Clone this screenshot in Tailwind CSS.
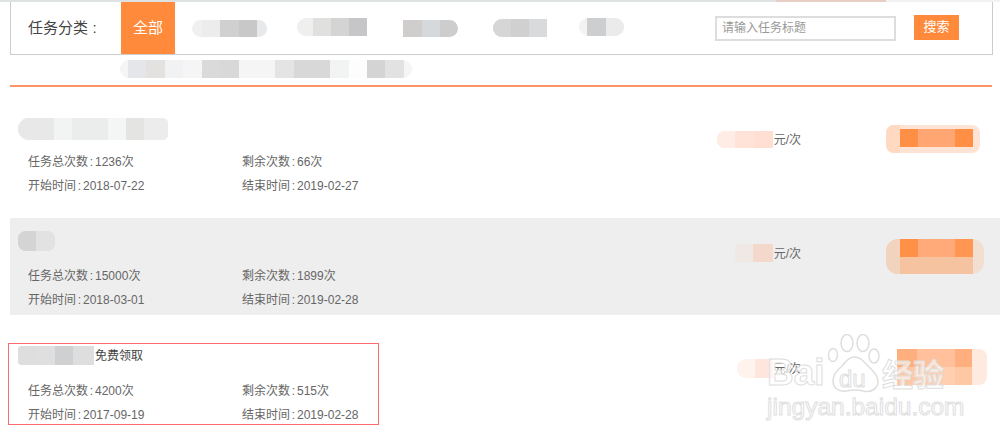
<!DOCTYPE html>
<html lang="zh">
<head>
    <meta charset="UTF-8">
    <title>任务分类</title>
    <script src="https://cdn.jsdelivr.net/npm/@tailwindcss/browser@4"></script>
</head>
<body class="relative w-[1000px] h-[439px] overflow-hidden bg-white font-['Liberation_Sans','Noto_Sans_CJK_SC',sans-serif] text-xs text-[#666]">

    <!-- top strip -->
    <div class="flex h-[2px] bg-[#dfe2e2]">
        <div class="w-[776px]"></div>
        <div class="w-[110px] bg-[#e8cfc4]"></div>
        <div class="flex-1 bg-[#f2f2f2]"></div>
    </div>

    <!-- filter box -->
    <div class="ml-[10px] w-[983px] h-[53px] border-x border-b border-[#ccc] flex items-center">
        <span class="ml-[17px] w-[93px] text-[15px] text-[#444]">任务分类<span class="inline-block w-[13px] text-center">:</span></span>
        <div class="w-[54px] h-full bg-[#ff8a3c] text-white text-[15px] flex items-center justify-center">全部</div>
        <div class="ml-[17px] h-[17px] w-[75px] rounded-full overflow-hidden flex bg-[#f0f0f0]">
            <i class="w-[10px]"></i><i class="w-[18px] bg-[#ececec]"></i><i class="w-[19px] bg-[#d0d0d0]"></i><i class="w-[18px] bg-[#c8c8c8]"></i><i class="flex-1 bg-[#e8e9eb]"></i>
        </div>
        <div class="ml-[30px] -mt-[2px] h-[18px] w-[70px] rounded-l-full overflow-hidden flex bg-[#efefef]">
            <i class="w-[16px]"></i><i class="w-[18px] bg-[#e0e0de]"></i><i class="w-[18px] bg-[#d4d4d4]"></i><i class="flex-1 bg-[#c6c6c8]"></i>
        </div>
        <div class="ml-[36px] h-[17px] w-[55px] rounded-r-full overflow-hidden flex">
            <i class="w-[19px] bg-[#cfcecc]"></i><i class="w-[18px] bg-[#d6d9dc]"></i><i class="flex-1 bg-[#cdcdcd]"></i>
        </div>
        <div class="ml-[35px] h-[18px] w-[54px] rounded-l-full overflow-hidden flex bg-[#dedede]">
            <i class="w-[18px] bg-[#d6d6d6]"></i><i class="w-[18px] bg-[#d0d0d0]"></i><i class="flex-1 bg-[#d8dadb]"></i>
        </div>
        <div class="ml-[32px] -mt-[2px] h-[18px] w-[45px] rounded-full overflow-hidden flex bg-[#f3f3f3]">
            <i class="w-[8px]"></i><i class="w-[19px] bg-[#cdcecf]"></i><i class="flex-1 bg-[#ebebec]"></i>
        </div>
        <div class="ml-[91px] w-[181px] h-[25px] border-2 border-[#ddd] flex items-center pl-[5px] text-[#999]">请输入任务标题</div>
        <div class="ml-[18px] -mt-[2px] w-[45px] h-[25px] bg-[#ff8a3c] text-white text-[13px] flex items-center justify-center">搜索</div>
    </div>

    <!-- second row of categories -->
    <div class="ml-[120px] mt-[5px] h-[18px] w-[292px] rounded-full overflow-hidden flex bg-[#f5f5f5]">
        <i class="w-[8px]"></i><i class="w-[18px] bg-[#e4e6e9]"></i><i class="w-[19px] bg-[#e3e2e0]"></i><i class="w-[18px] bg-[#f1f2f4]"></i><i class="w-[19px] bg-[#f5f5f5]"></i><i class="w-[18px] bg-[#dadada]"></i><i class="w-[19px] bg-[#d8d8d8]"></i><i class="w-[36px] bg-[#f5f5f5]"></i><i class="w-[19px] bg-[#e4e4e4]"></i><i class="w-[18px] bg-[#d8d8d8]"></i><i class="w-[18px] bg-[#d8d8d8]"></i><i class="w-[19px] bg-[#f2f3f3]"></i><i class="w-[18px] bg-[#fdfdfd]"></i><i class="w-[18px] bg-[#d4d4d4]"></i><i class="w-[19px] bg-[#e2e2e2]"></i>
    </div>

    <div class="ml-[10px] mt-[7px] w-[982px] h-[2px] bg-[#ff9566]"></div>

    <!-- task list -->
    <div class="ml-[10px] mt-[17px] flex flex-col">

        <div class="h-[97px] flex">
            <div class="w-[700px] pl-[18px]">
                <div class="h-[45px] -ml-[10px] flex items-center">
                    <div class="h-[22px] w-[150px] rounded-l-xl rounded-r-md overflow-hidden flex bg-[#ededed] mt-[5px]">
                        <i class="w-[36px] bg-[#e8e8e8]"></i><i class="w-[18px] bg-[#f2f3f3]"></i><i class="w-[36px] bg-[#ebecec]"></i><i class="w-[18px] bg-[#f4f5f5]"></i><i class="w-[18px] bg-[#e4e4e3]"></i><i class="flex-1 bg-[#ececec]"></i>
                    </div>
                </div>
                <div class="grid grid-cols-[214px_1fr] leading-[24px] pt-[1px]">
                    <span>任务总次数<span class="inline-block w-[7px] text-center">:</span>1236次</span><span>剩余次数<span class="inline-block w-[7px] text-center">:</span>66次</span>
                    <span>开始时间<span class="inline-block w-[7px] text-center">:</span>2018-07-22</span><span>结束时间<span class="inline-block w-[7px] text-center">:</span>2019-02-27</span>
                </div>
            </div>
            <div class="w-[91px] h-[28px] mt-[21px] flex items-center justify-end">
                <div class="h-[17px] w-[56px] rounded-l-lg overflow-hidden flex bg-[#ffdfd2]">
                    <i class="w-[18px] bg-[#ffede5]"></i><i class="w-[19px] bg-[#ffe2d8]"></i>
                </div>
                <span class="ml-[1px] pt-[2px]">元/次</span>
            </div>
            <div class="ml-[85px] w-[94px] h-[28px] mt-[21px] rounded-lg overflow-hidden flex bg-[#ffe4d5]">
                <i class="w-[14px] bg-[#ffd9c2]"></i>
                <div class="w-[73px] flex flex-col">
                    <div class="h-[4px] bg-[#ffe4d5]"></div>
                    <div class="flex h-[18px]"><i class="w-[18px] bg-[#ff8f44]"></i><i class="w-[37px] bg-[#ffa673]"></i><i class="w-[18px] bg-[#ff8f44]"></i></div>
                </div>
            </div>
        </div>

        <div class="mt-[17px] h-[97px] flex bg-[#eee]">
            <div class="w-[700px] pl-[18px]">
                <div class="h-[45px] -ml-[10px] flex items-center">
                    <div class="h-[20px] w-[37px] rounded-lg overflow-hidden flex bg-[#e0e0e0]">
                        <i class="w-[18px] bg-[#d4d4d4]"></i><i class="flex-1 bg-[#e2e2e2]"></i>
                    </div>
                </div>
                <div class="grid grid-cols-[214px_1fr] leading-[24px] pt-[1px]">
                    <span>任务总次数<span class="inline-block w-[7px] text-center">:</span>15000次</span><span>剩余次数<span class="inline-block w-[7px] text-center">:</span>1899次</span>
                    <span>开始时间<span class="inline-block w-[7px] text-center">:</span>2018-03-01</span><span>结束时间<span class="inline-block w-[7px] text-center">:</span>2019-02-28</span>
                </div>
            </div>
            <div class="w-[91px] h-[28px] mt-[21px] flex items-center justify-end">
                <div class="h-[18px] w-[38px] rounded-l overflow-hidden flex bg-[#f0e9e5]">
                    <i class="w-[18px] bg-[#f0e8e4]"></i><i class="flex-1 bg-[#f3d8cb]"></i>
                </div>
                <span class="ml-[1px] pt-[2px]">元/次</span>
            </div>
            <div class="ml-[85px] w-[98px] h-[35px] mt-[21px] rounded-xl overflow-hidden flex bg-[#f2dfd2]">
                <i class="w-[14px] bg-[#f2d3bd]"></i>
                <div class="w-[73px] flex flex-col">
                    <div class="flex h-[18px]"><i class="w-[18px] bg-[#ff9048]"></i><i class="w-[37px] bg-[#ffaa78]"></i><i class="w-[18px] bg-[#ff9652]"></i></div>
                    <div class="flex-1 bg-[#f5c3a0]"></div>
                </div>
            </div>
        </div>

        <div class="mt-[18px] h-[97px] flex">
            <div class="w-[700px] pl-[18px]">
                <div class="h-[45px] flex items-center text-[#444]">
                    <div class="h-[19px] w-[76px] -ml-[10px] rounded-l overflow-hidden flex bg-[#dcdcdc]">
                        <i class="w-[18px] bg-[#dedede]"></i><i class="w-[19px] bg-[#dfdfdf]"></i><i class="w-[18px] bg-[#cfd0d1]"></i><i class="flex-1 bg-[#dedede]"></i>
                    </div>
                    <span class="ml-[1px]">免费领取</span>
                </div>
                <div class="grid grid-cols-[214px_1fr] leading-[24px] pt-[1px]">
                    <span>任务总次数<span class="inline-block w-[7px] text-center">:</span>4200次</span><span>剩余次数<span class="inline-block w-[7px] text-center">:</span>515次</span>
                    <span>开始时间<span class="inline-block w-[7px] text-center">:</span>2017-09-19</span><span>结束时间<span class="inline-block w-[7px] text-center">:</span>2019-02-28</span>
                </div>
            </div>
            <div class="w-[91px] h-[28px] mt-[21px] flex items-center justify-end">
                <div class="h-[19px] w-[36px] rounded-l-full overflow-hidden flex bg-[#fff0ea]">
                    <i class="w-[18px] bg-[#fff3ee]"></i><i class="flex-1 bg-[#ffe6dc]"></i>
                </div>
                <span class="ml-[1px] pt-[2px]">元/次</span>
            </div>
            <div class="ml-[96px] w-[90px] h-[36px] mt-[16px] rounded-r-lg overflow-hidden flex bg-[#ffeadf]">
                <div class="w-[75px] flex flex-col">
                    <div class="flex h-[18px]"><i class="w-[20px] bg-[#ffae7d]"></i><i class="w-[38px] bg-[#ffc09b]"></i><i class="w-[17px] bg-[#ffae7d]"></i></div>
                    <div class="flex flex-1"><i class="w-[20px] bg-[#ffc8a5]"></i><i class="w-[38px] bg-[#ffcfb0]"></i><i class="w-[17px] bg-[#ffc8a5]"></i></div>
                </div>
            </div>
        </div>
    </div>

    <!-- red annotation box -->
    <div class="absolute left-[8px] top-[343px] w-[371px] h-[82px] border border-[#ff6a70]"></div>

    <!-- watermark -->
    <div class="absolute left-[767px] top-[334px] w-[190px] h-[92px] text-white/60 [-webkit-text-stroke:1px_#dedede] font-['Liberation_Sans',sans-serif]">
        <svg class="absolute left-[60px] top-0" width="62" height="64" viewBox="0 0 62 64" fill="#fff" fill-opacity="0.55" stroke="#dedede" stroke-width="1.5">
            <ellipse cx="6" cy="21" rx="4.5" ry="6.5"/>
            <ellipse cx="20" cy="9" rx="6" ry="8.5"/>
            <ellipse cx="36" cy="9" rx="6" ry="8.5"/>
            <ellipse cx="47" cy="22" rx="5" ry="7"/>
            <path d="M27 23c-6 0-8 5-12 9-5 4-9 9-9 15 0 7 6 11 13 10 5-1 11-2 17 0 8 2 15-2 15-10 0-6-5-10-9-14-5-4-7-10-15-10z"/>
        </svg>
        <span class="absolute left-0 top-[17px] text-[37px] font-bold leading-[44px]">Bai</span>
        <span class="absolute left-[72px] top-[30px] text-[24px] leading-[30px]">du</span>
        <span class="absolute left-[115px] top-[21px] text-[31px] font-bold leading-[36px] font-['Noto_Sans_CJK_SC',sans-serif]">经验</span>
        <span class="absolute left-0 top-[58px] text-[24.5px] leading-[30px] whitespace-nowrap">jingyan.baidu.com</span>
    </div>

</body>
</html>
